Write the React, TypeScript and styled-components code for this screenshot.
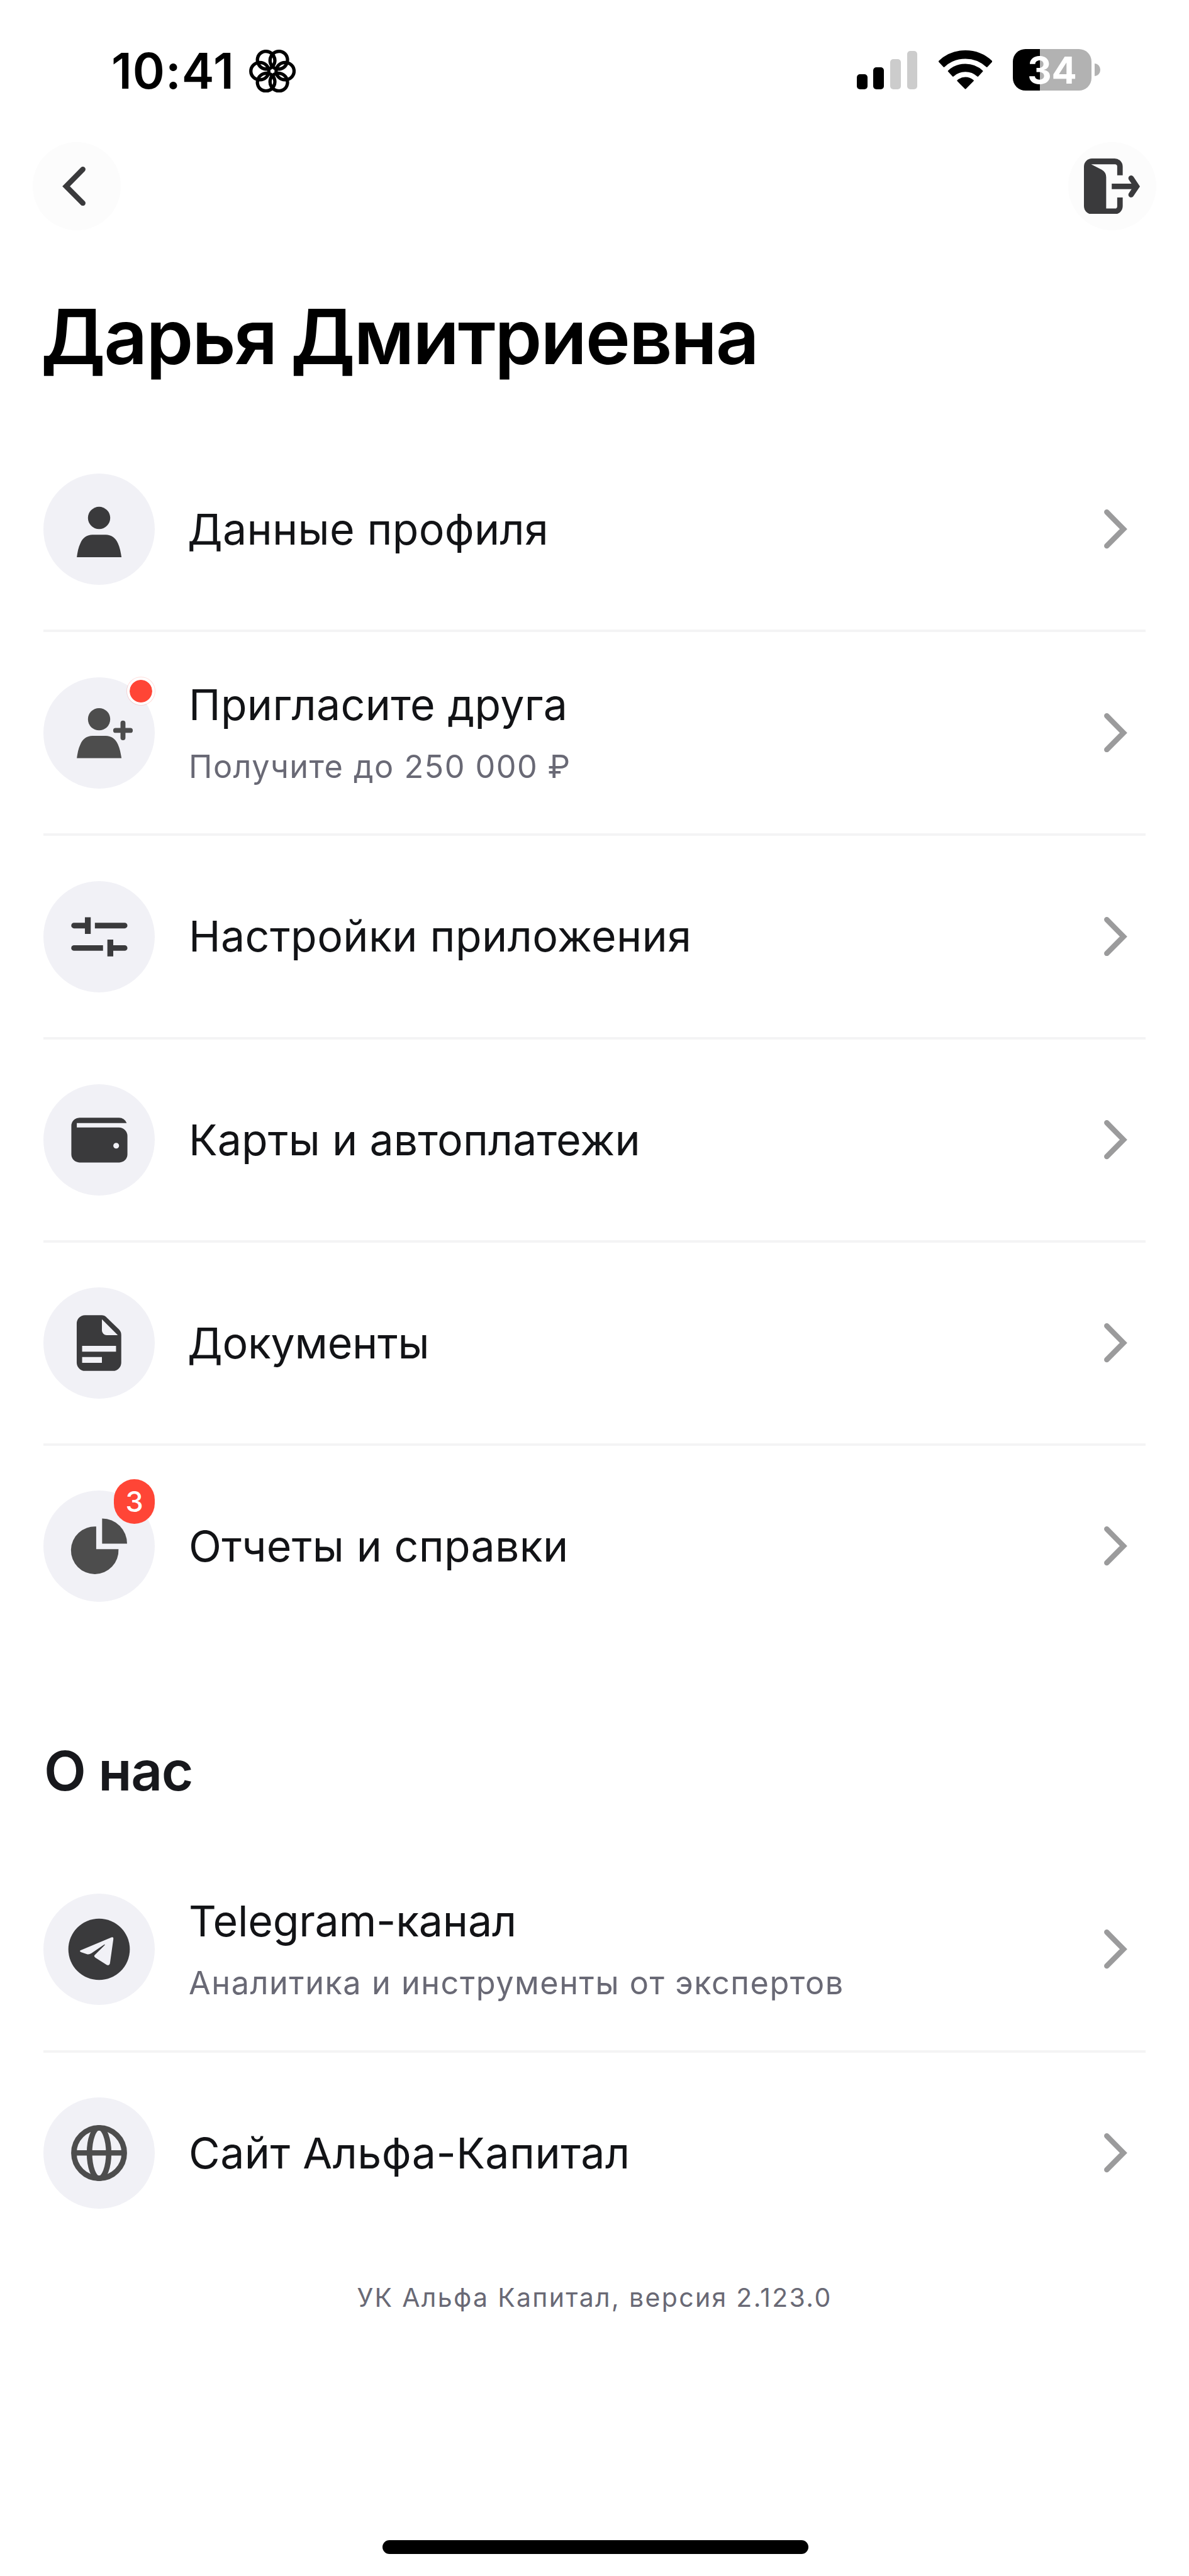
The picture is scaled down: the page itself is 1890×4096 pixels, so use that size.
import React from 'react';
import styled, { createGlobalStyle } from 'styled-components';

const ink = '#3a3a3c';
const softInk = '#4d4d4d';
const red = '#ff4536';

const GlobalStyle = createGlobalStyle`
  *, *::before, *::after { box-sizing: border-box; }
  body {
    margin: 0;
    background: #fff;
    font-family: Inter, "Noto Sans", sans-serif;
  }
`;

const Screen = styled.main`
  display: flex;
  flex-direction: column;
  width: 1890px;
  height: 4096px;
  background: #fff;
  overflow: hidden;
`;

/* ---------- status bar ---------- */

const StatusBar = styled.div`
  display: flex;
  align-items: center;
  justify-content: space-between;
  flex: none;
  height: 226px;
  padding: 0 141.5px 4px 177px;
`;

const StatusGroup = styled.div`
  display: flex;
  align-items: center;
`;

const Clock = styled.span`
  width: 219px;
  font-size: 77.7px;
  font-weight: 600;
  line-height: 94px;
  letter-spacing: 0.95px;
  white-space: nowrap;
  padding-top: 4px;
  box-sizing: content-box;
`;

const FocusIcon = styled.svg`
  display: block;
  width: 74.2px;
  height: 68.3px;
  margin-top: 4px;
`;

const Bars = styled.div`
  display: flex;
  align-items: flex-end;
  gap: 9.8px;
  height: 61px;
  margin: 0 33.2px 0 0;
`;

const Bar = styled.span<{ $height: number; $on?: boolean }>`
  width: 16.8px;
  height: ${(p) => p.$height}px;
  border-radius: 5px;
  background: ${(p) => (p.$on ? '#000' : '#cccccc')};
`;

const WifiIcon = styled.svg`
  display: block;
  width: 85.2px;
  height: 62.1px;
  margin-right: 33.2px;
`;

const Battery = styled.div`
  display: flex;
  align-items: center;
  justify-content: center;
  width: 125px;
  height: 66.5px;
  border-radius: 20px;
  background: linear-gradient(to right, #000 43px, #b2b2b2 43px);
  color: #fff;
  font-size: 59.5px;
  font-weight: 700;
  line-height: 66px;
`;

const BatteryCap = styled.span`
  width: 8.8px;
  height: 20px;
  margin-left: 4.7px;
  border-radius: 0 100% 100% 0 / 0 50% 50% 0;
  background: #b2b2b2;
`;

/* ---------- navigation ---------- */

const NavBar = styled.nav`
  display: flex;
  justify-content: space-between;
  flex: none;
  padding: 0 52px;
`;

const RoundButton = styled.button`
  display: flex;
  align-items: center;
  justify-content: center;
  width: 140px;
  height: 140px;
  padding: 0;
  border: 0;
  border-radius: 50%;
  background: #fcfcfc;
`;

const ChevronSvg = styled.svg<{ $back?: boolean }>`
  display: block;
  flex: none;
  width: 37px;
  height: 62.4px;
  margin-right: ${(p) => (p.$back ? '10px' : '29.5px')};
  transform: ${(p) => (p.$back ? 'scaleX(-1)' : 'none')};
`;

const LogoutSvg = styled.svg`
  display: block;
  width: 89.2px;
  height: 88.7px;
`;

/* ---------- content ---------- */

const Title = styled.h1`
  flex: none;
  margin: 94px 69px 72px 65px;
  color: #000;
  font-size: 120.5px;
  font-weight: 600;
  line-height: 150px;
  letter-spacing: -2.3px;
  word-spacing: -5px;
  white-space: nowrap;
`;

const SectionTitle = styled.h2`
  flex: none;
  margin: 138px 69px 63px 70px;
  color: #17181c;
  font-size: 87px;
  font-weight: 600;
  line-height: 120px;
  letter-spacing: -1.3px;
`;

const List = styled.div`
  display: flex;
  flex-direction: column;
  flex: none;
  padding: 0 69px;
`;

const Row = styled.div<{ $height: number; $last?: boolean }>`
  display: flex;
  align-items: center;
  height: ${(p) => p.$height}px;
  border-bottom: ${(p) => (p.$last ? '0' : '4px solid #f4f4f5')};
`;

const IconCircle = styled.div`
  position: relative;
  flex: none;
  width: 177px;
  height: 177px;
  margin-right: 54px;
  border-radius: 50%;
  background: #f1f1f6;
`;

const Glyph = styled.svg`
  display: block;
  width: 177px;
  height: 177px;
`;

const Dot = styled.span`
  position: absolute;
  top: 0;
  left: 133px;
  width: 44px;
  height: 44px;
  border: 4px solid #fff;
  border-radius: 50%;
  background: ${red};
  background-clip: padding-box;
  box-shadow: 0 0 0 1px rgba(255, 69, 54, 0.18);
`;

const Count = styled.span`
  position: absolute;
  top: -18px;
  right: 0;
  width: 65px;
  height: 71px;
  border-radius: 32.5px;
  background: ${red};
  color: #fff;
  font-size: 45px;
  font-weight: 500;
  line-height: 72px;
  text-align: center;
`;

const Texts = styled.div`
  display: flex;
  flex-direction: column;
  gap: 12px;
  flex: 1;
  padding-bottom: 2px;
`;

const RowTitle = styled.span<{ $tracking: number; $outdent?: number }>`
  margin-left: ${(p) => -(p.$outdent ?? 0)}px;
  color: #121316;
  font-size: 68px;
  line-height: 96px;
  letter-spacing: ${(p) => p.$tracking}px;
  white-space: nowrap;
`;

const RowNote = styled.span<{ $tracking: number }>`
  color: #696975;
  font-size: 50.4px;
  line-height: 77px;
  letter-spacing: ${(p) => p.$tracking}px;
  white-space: nowrap;
`;

const Version = styled.p`
  flex: none;
  margin: 41px 0 0;
  color: #696975;
  font-size: 41px;
  line-height: 58px;
  letter-spacing: 2.32px;
  text-align: center;
`;

const HomeIndicator = styled.div`
  flex: none;
  align-self: center;
  width: 677px;
  height: 22.5px;
  margin: auto 0 34.8px 2px;
  border-radius: 12px;
  background: #000;
`;

/* ---------- icons ---------- */

const Chevron = ({ back }: { back?: boolean }) => (
  <ChevronSvg $back={back} viewBox="0 0 37 62.4" fill="none">
    <path
      d="M4.3 4.3 30.9 31.2 4.3 58.1"
      stroke={back ? ink : '#9b9b9c'}
      strokeWidth="8.5"
      strokeLinecap="round"
    />
  </ChevronSvg>
);

const Logout = () => (
  <LogoutSvg viewBox="0 0 111 110.4">
    <path
      fill={ink}
      d="M16 0H60.7A16 16 0 0 1 76.7 16V33.3H65.8V16A4.5 4.5 0 0 0 61.3 11.5H14.3L35 22Q44 27 44 37V99H61.3A4.5 4.5 0 0 0 65.8 94.5V77.3H76.7V94.4A16 16 0 0 1 60.7 110.4H16A16 16 0 0 1 0 94.4V16A16 16 0 0 1 16 0Z"
    />
    <path fill="none" stroke={ink} strokeWidth="10.8" d="M55 55.3H101" />
    <path
      fill="none"
      stroke={ink}
      strokeWidth="10.8"
      strokeLinecap="round"
      d="M93.3 38.9 104.3 55.3 93.3 71.7"
    />
  </LogoutSvg>
);

const Flower = () => (
  <FocusIcon viewBox="0 0 92.4 85" fill="none" stroke="#000" strokeWidth="6.6">
    {[0, 60, 120, 180, 240, 300].map((a) => (
      <ellipse key={a} cx="71.2" cy="42.5" rx="17.8" ry="17.1" transform={`rotate(${a} 46.2 42.5)`} />
    ))}
  </FocusIcon>
);

const Wifi = () => (
  <WifiIcon viewBox="0 0 106 77.3" stroke="#000" strokeWidth="3" strokeLinejoin="round">
    <path d="M1.3 21.9A75.8 75.8 0 0 1 104.7 21.9L95.4 31.9A62.1 62.1 0 0 0 10.6 31.9Z" />
    <path d="M19.8 41.1A49.1 49.1 0 0 1 86.2 41.1L77.4 50.7A36.1 36.1 0 0 0 28.6 50.7Z" />
    <path d="M38 60.1A22.8 22.8 0 0 1 68 60.1L53 75.3Z" />
  </WifiIcon>
);

const Person = () => (
  <Glyph viewBox="0 0 220 220" fill={ink}>
    <circle cx="110" cy="87.7" r="22" />
    <path d="M66 165.2C67.5 155 69 146 73 138C77.5 127 86 121 97 121H123C134 121 142.5 127 147.3 138C151 146 152.7 155 154.3 165.2Z" />
  </Glyph>
);

const Invite = () => (
  <Glyph viewBox="0 0 220 220" fill={softInk}>
    <circle cx="110" cy="82.8" r="22" />
    <path d="M66 159.8C67.5 149.6 69 140.6 73 132.6C77.5 121.6 86 115.6 97 115.6H123C134 115.6 142.5 121.6 147.3 132.6C151 140.6 152.7 149.6 154.3 159.8Z" />
    <path
      d="M157.2 90.4V119.4M142.7 104.9H171.7"
      stroke={softInk}
      strokeWidth="9.8"
      strokeLinecap="round"
    />
  </Glyph>
);

const Sliders = () => (
  <Glyph viewBox="0 0 220 220" fill={ink}>
    <path d="M60.5 82.4H82V71.5H93.5V104.5H82V93.4H60.5A5.5 5.5 0 0 1 60.5 82.4Z" />
    <path d="M101.7 82.4H160.5A5.5 5.5 0 0 1 160.5 93.4H101.7Z" />
    <path d="M60.5 126.8H117.8V137.8H60.5A5.5 5.5 0 0 1 60.5 126.8Z" />
    <path d="M126.4 115.7H138V126.8H160.5A5.5 5.5 0 0 1 160.5 137.8H138V148.7H126.4Z" />
  </Glyph>
);

const Wallet = () => (
  <Glyph viewBox="0 0 220 220" fill={ink}>
    <path
      fillRule="evenodd"
      d="M71.2 66.2H149A16 16 0 0 1 164.6 76.9H66V85.4H149A17 17 0 0 1 166 102.4V138.6A16 16 0 0 1 150 154.6H71.2A16 16 0 0 1 55.2 138.6V82.2A16 16 0 0 1 71.2 66.2ZM143.8 115.8A5.7 5.7 0 1 0 143.8 127.2A5.7 5.7 0 1 0 143.8 115.8Z"
    />
  </Glyph>
);

const Doc = () => (
  <Glyph viewBox="0 0 220 220" fill={ink}>
    <path
      fillRule="evenodd"
      d="M82.3 54.9H115Q120.5 54.9 124.5 58.9L149.2 83Q153.8 87.5 153.8 94V148.6A16.5 16.5 0 0 1 137.3 165.1H82.3A16.5 16.5 0 0 1 65.8 148.6V71.4A16.5 16.5 0 0 1 82.3 54.9ZM115.6 63V85A9.5 9.5 0 0 0 125.1 94.5H147ZM76.5 115.6V127.2H143.5V115.6ZM76.5 137.8V149.2H115.6V137.8Z"
    />
  </Glyph>
);

const Pie = () => (
  <Glyph viewBox="0 0 220 220" fill={softInk}>
    <path d="M104.3 71.3V116H148.4A47 47 0 1 1 104.3 71.3Z" />
    <path d="M116 55.3A49.5 49.6 0 0 1 165.3 105H116Z" />
  </Glyph>
);

const Telegram = () => (
  <Glyph viewBox="0 0 220 220">
    <circle cx="110" cy="110" r="60.7" fill={ink} />
    <path
      fill="#f1f1f6"
      d="M73 112.2 134.5 86.5Q138.8 85 138.2 90L131.5 137.5Q130 143 125 140.8L103 126.8Q98.7 123.7 101.5 121.3L121 102Q122.5 99.5 120 100.8L95 117.8Q91 120.4 87 119.8L75 116Q70.5 114 73 112.2Z"
    />
  </Glyph>
);

const Globe = () => (
  <Glyph viewBox="0 0 220 220" fill="none" stroke={softInk} strokeWidth="10.8">
    <circle cx="110" cy="110" r="49.8" />
    <ellipse cx="110" cy="110" rx="19" ry="50" />
    <path d="M60 109.7H160" />
  </Glyph>
);

/* ---------- screen ---------- */

type Item = {
  title: string;
  tracking: number;
  outdent?: number;
  icon: React.ReactNode;
  height: number;
  note?: string;
  noteTracking?: number;
  dot?: boolean;
  count?: number;
};

const profileItems: Item[] = [
  { title: 'Данные профиля', tracking: 0.32, outdent: 2, icon: <Person />, height: 323 },
  {
    title: 'Пригласите друга',
    tracking: 0.35,
    note: 'Получите до 250 000 ₽',
    noteTracking: 1.44,
    icon: <Invite />,
    height: 324,
    dot: true,
  },
  { title: 'Настройки приложения', tracking: 0.44, icon: <Sliders />, height: 324 },
  { title: 'Карты и автоплатежи', tracking: 0.1, icon: <Wallet />, height: 323 },
  { title: 'Документы', tracking: -0.25, outdent: 2, icon: <Doc />, height: 323 },
  { title: 'Отчеты и справки', tracking: 0.3, icon: <Pie />, height: 319, count: 3 },
];

const aboutItems: Item[] = [
  {
    title: 'Telegram-канал',
    tracking: -0.17,
    note: 'Аналитика и инструменты от экспертов',
    noteTracking: 1.54,
    icon: <Telegram />,
    height: 325,
  },
  { title: 'Сайт Альфа-Капитал', tracking: 0.48, icon: <Globe />, height: 319 },
];

const MenuList = ({ items }: { items: Item[] }) => (
  <List>
    {items.map((item, i) => (
      <Row key={item.title} $height={item.height} $last={i === items.length - 1}>
        <IconCircle>
          {item.icon}
          {item.dot && <Dot />}
          {item.count !== undefined && <Count>{item.count}</Count>}
        </IconCircle>
        <Texts>
          <RowTitle $tracking={item.tracking} $outdent={item.outdent}>
            {item.title}
          </RowTitle>
          {item.note && <RowNote $tracking={item.noteTracking ?? 0}>{item.note}</RowNote>}
        </Texts>
        <Chevron />
      </Row>
    ))}
  </List>
);

export default function App() {
  return (
    <>
      <GlobalStyle />
      <Screen>
        <StatusBar>
          <StatusGroup>
            <Clock>10:41</Clock>
            <Flower />
          </StatusGroup>
          <StatusGroup>
            <Bars>
              <Bar $height={24} $on />
              <Bar $height={34.3} $on />
              <Bar $height={47.7} />
              <Bar $height={61} />
            </Bars>
            <Wifi />
            <Battery>34</Battery>
            <BatteryCap />
          </StatusGroup>
        </StatusBar>
        <NavBar>
          <RoundButton aria-label="Назад">
            <Chevron back />
          </RoundButton>
          <RoundButton aria-label="Выйти">
            <Logout />
          </RoundButton>
        </NavBar>
        <Title>Дарья Дмитриевна</Title>
        <MenuList items={profileItems} />
        <SectionTitle>О нас</SectionTitle>
        <MenuList items={aboutItems} />
        <Version>УК Альфа Капитал, версия 2.123.0</Version>
        <HomeIndicator />
      </Screen>
    </>
  );
}
